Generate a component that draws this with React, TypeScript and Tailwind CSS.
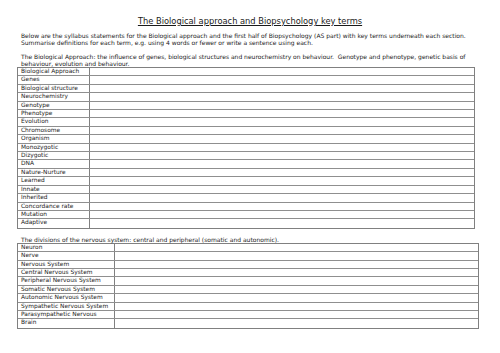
const bioTerms = [
  'Biological Approach',
  'Genes',
  'Biological structure',
  'Neurochemistry',
  'Genotype',
  'Phenotype',
  'Evolution',
  'Chromosome',
  'Organism',
  'Monozygotic',
  'Dizygotic',
  'DNA',
  'Nature-Nurture',
  'Learned',
  'Innate',
  'Inherited',
  'Concordance rate',
  'Mutation',
  'Adaptive',
]

const nervousTerms = [
  'Neuron',
  'Nerve',
  'Nervous System',
  'Central Nervous System',
  'Peripheral Nervous System',
  'Somatic Nervous System',
  'Autonomic Nervous System',
  'Sympathetic Nervous System',
  'Parasympathetic Nervous',
  'Brain',
]

function TermTable({ terms, labelWidth, width }: { terms: string[]; labelWidth: string; width: string }) {
  return (
    <div className={`ml-[17px] border border-[#808080] ${width}`}>
      {terms.map((t, i) => (
        <div
          key={t}
          className={`flex h-[8.42px] ${i < terms.length - 1 ? 'border-b border-[#8f8f8f]' : ''}`}
        >
          <div className={`${labelWidth} shrink-0 border-r border-[#808080] pl-[3px] text-[5.9px] leading-[7.4px] text-[#222] whitespace-nowrap overflow-hidden`}>
            {t}
          </div>
          <div className="flex-1" />
        </div>
      ))}
    </div>
  )
}

export default function App() {
  return (
    <div
      className="w-[500px] h-[353px] bg-white text-[#1a1a1a] overflow-hidden"
      style={{ fontFamily: '"DejaVu Sans", Verdana, sans-serif' }}
    >
      <div className="pt-[16px] text-center text-[8.3px] leading-[10px] underline">
        The Biological approach and Biopsychology key terms
      </div>

      <p className="mt-[6px] pl-[21px] text-[6px] leading-[7px] whitespace-nowrap">
        Below are the syllabus statements for the Biological approach and the first half of Biopsychology (AS part) with key terms underneath each section.
        <br />
        Summarise definitions for each term, e.g. using 4 words or fewer or write a sentence using each.
      </p>

      <p className="mt-[7px] pl-[21px] text-[6px] leading-[7px] whitespace-nowrap">
        The Biological Approach: the influence of genes, biological structures and neurochemistry on behaviour.&nbsp; Genotype and phenotype, genetic basis of
        <br />
        behaviour, evolution and behaviour.
      </p>

      <TermTable terms={bioTerms} labelWidth="w-[72px]" width="w-[458px]" />

      <p className="mt-[7px] pl-[21px] text-[6px] leading-[7px] whitespace-nowrap">
        The divisions of the nervous system: central and peripheral (somatic and autonomic).
      </p>

      <TermTable terms={nervousTerms} labelWidth="w-[97px]" width="w-[462px]" />
    </div>
  )
}
